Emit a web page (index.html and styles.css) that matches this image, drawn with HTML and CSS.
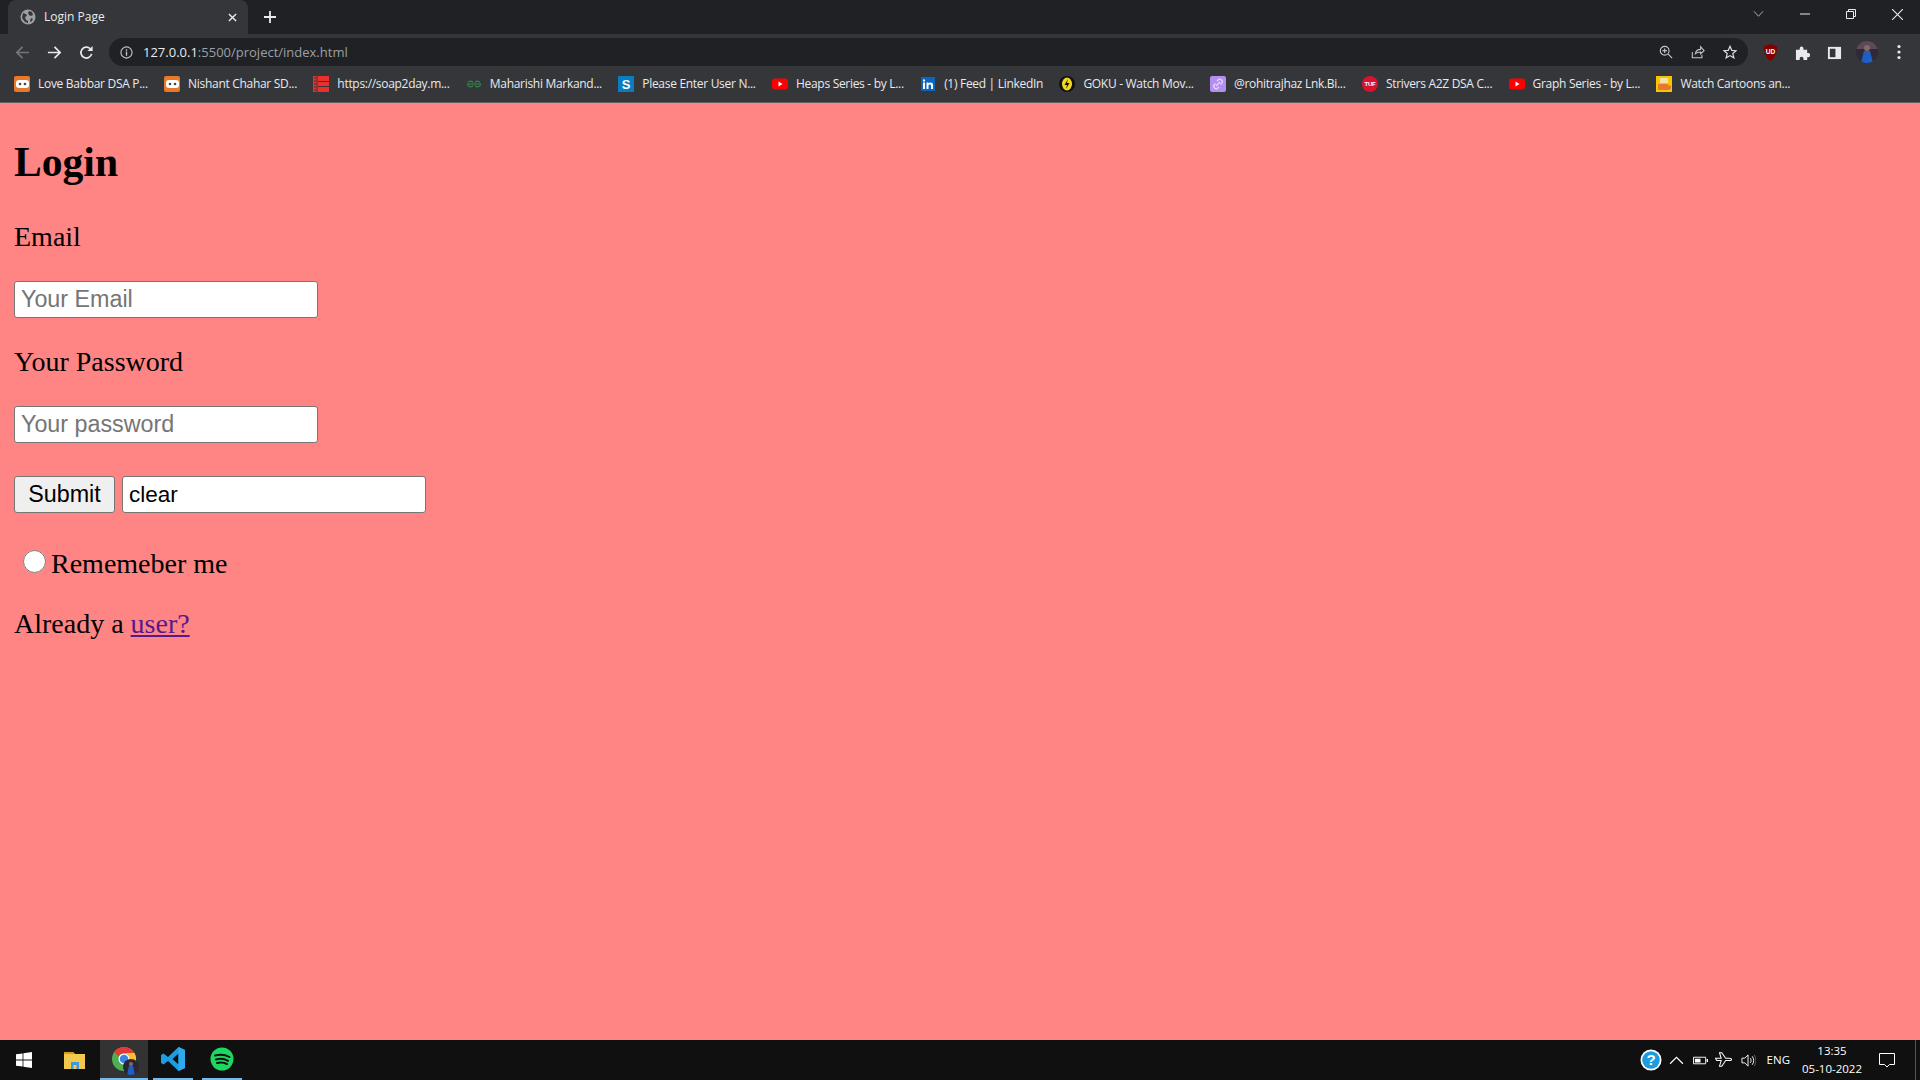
FILE: index.html
```html
<!DOCTYPE html>
<html>
<head>
    <title>Login Page</title>
    <link rel="stylesheet" href="styles.css">
</head>
<body>
    <div class="tabstrip">
        <div class="tab">
            <svg class="tab-favicon" viewBox="0 0 16 16"><circle cx="8" cy="8" r="7.500" fill="#9aa0a6"/><path d="M3 4l3 1 1 2-2 1 1 3 2 1v2l-3-1-3-4zM9 2l3 1 1 3-2 1-2-1-1-2zM11 9l2 1-2 3-1-1z" fill="#35363a"/></svg>
            <span class="tab-title">Login Page</span>
            <svg class="tab-close" viewBox="0 0 10 10"><path d="M1 1l8 8M9 1l-8 8" stroke="#e8eaed" stroke-width="1.6"/></svg>
        </div>
        <svg class="tab-new" viewBox="0 0 12 12"><path d="M6 0v12M0 6h12" stroke="#e8eaed" stroke-width="1.8"/></svg>
        <svg class="win-chevron" viewBox="0 0 12 8"><path d="M1 1l5 5.500 5-5.500" fill="none" stroke="#b5b7ba" stroke-width="1"/></svg>
        <svg class="win-btn win-min" viewBox="0 0 10 10"><path d="M0 5h10" stroke="#e8eaed"/></svg>
        <svg class="win-btn win-restore" viewBox="0 0 10 10"><path d="M.5 2.500h7v7h-7zM2.500 2.500v-2h7v7h-2" fill="none" stroke="#e8eaed"/></svg>
        <svg class="win-btn win-close" viewBox="0 0 10 10"><path d="M0 0l10 10M10 0l-10 10" stroke="#e8eaed"/></svg>
    </div>

    <div class="toolbar">
        <svg class="nav-icon nav-back" viewBox="0 0 16 16"><path d="M15 8H2M8 2L2 8l6 6" fill="none" stroke="#73767a" stroke-width="1.8"/></svg>
        <svg class="nav-icon" viewBox="0 0 16 16"><path d="M1 8h13M8 2l6 6-6 6" fill="none" stroke="#e8eaed" stroke-width="1.8"/></svg>
        <svg class="nav-icon" viewBox="0 0 16 16"><path d="M13.500 9.500A5.800 5.800 0 1 1 12 4" fill="none" stroke="#e8eaed" stroke-width="1.800"/><path d="M14.500 1v5.500H9z" fill="#e8eaed"/></svg>
        <div class="omnibox">
            <svg class="omni-info" viewBox="0 0 14 14"><circle cx="7" cy="7" r="6" fill="none" stroke="#c4c7ca" stroke-width="1.200"/><path d="M7 6v4.500M7 3.500v1.500" stroke="#c4c7ca" stroke-width="1.400"/></svg>
            <span class="url"><span class="url-host">127.0.0.1</span>:5500/project/index.html</span>
            <div class="omni-actions">
                <svg class="omni-icon" viewBox="0 0 16 16"><circle cx="6.500" cy="6.500" r="5" fill="none" stroke="#c4c7ca" stroke-width="1.300"/><path d="M10.500 10.500l4.500 4.500M4 6.500h5M6.500 4v5" stroke="#c4c7ca" stroke-width="1.300"/></svg>
                <svg class="omni-icon" viewBox="0 0 16 16"><path d="M1.500 8v6.500h11V11M5 10c.5-3.500 3-5 6-5V2l4 4.500L11 10V8c-2.500 0-4.500.5-6 2z" fill="none" stroke="#c4c7ca" stroke-width="1.200"/></svg>
                <svg class="omni-icon" viewBox="0 0 16 16"><path d="M8 1.500l2 4.600 5 .4-3.800 3.300 1.200 4.900L8 12.100l-4.400 2.600 1.200-4.900L1 6.500l5-.4z" fill="none" stroke="#dadce0" stroke-width="1.400"/></svg>
            </div>
        </div>
        <svg class="ext-icon ext-shield" viewBox="0 0 16 18"><path d="M8 0l7 2.500c0 7-1.500 11.500-7 15.500C2.500 14 1 9.500 1 2.500z" fill="#800000"/><text x="8" y="11" class="shield-text">UD</text></svg>
        <svg class="ext-icon" viewBox="0 0 16 16"><path d="M1 5h4V3.500a2 2 0 0 1 4 0V5h4v3.500h1a2.200 2.200 0 0 1 0 4.500h-1v3H9v-1.500a2 2 0 0 0-4 0V16H1z" fill="#e8eaed"/></svg>
        <svg class="ext-icon" viewBox="0 0 16 16"><path d="M1 2h14v13H1z" fill="#e8eaed"/><path d="M3 4h6v9H3z" fill="#35363a"/></svg>
        <svg class="ext-avatar" viewBox="0 0 22 22"><rect width="22" height="22" fill="#2f2a3a"/><path d="M0 0h22v8H0z" fill="#5b4a58"/><circle cx="11" cy="7" r="3" fill="#8a6a58"/><path d="M5 22l3-12h6l3 12z" fill="#1f5fc4"/></svg>
        <svg class="ext-menu" viewBox="0 0 4 16"><circle cx="2" cy="2.500" r="1.600" fill="#e8eaed"/><circle cx="2" cy="8" r="1.600" fill="#e8eaed"/><circle cx="2" cy="13.500" r="1.600" fill="#e8eaed"/></svg>
    </div>

    <div class="bookmarks">
        <div class="bookmark">
            <svg class="fav" viewBox="0 0 16 16"><rect width="16" height="16" rx="2" fill="#e8792b"/><rect x="2" y="4" width="13" height="8" rx="3" fill="#fff"/><circle cx="6" cy="8" r="1.300" fill="#444"/><circle cx="11" cy="8" r="1.300" fill="#444"/></svg>
            <span>Love Babbar DSA P...</span>
        </div>
        <div class="bookmark">
            <svg class="fav" viewBox="0 0 16 16"><rect width="16" height="16" rx="2" fill="#e8792b"/><rect x="2" y="4" width="13" height="8" rx="3" fill="#fff"/><circle cx="6" cy="8" r="1.300" fill="#444"/><circle cx="11" cy="8" r="1.300" fill="#444"/></svg>
            <span>Nishant Chahar SD...</span>
        </div>
        <div class="bookmark">
            <svg class="fav" viewBox="0 0 16 16"><path d="M0 0h16v16H0z" fill="#e9302a"/><path d="M4 0v16M5 5.500h11M5 10.500h11" stroke="#35363a"/><path d="M1 2h2M1 5h2M1 8h2M1 11h2M1 14h2" stroke="#35363a" stroke-width="1.200"/></svg>
            <span>https://soap2day.m...</span>
        </div>
        <div class="bookmark">
            <svg class="fav" viewBox="0 0 16 16"><path d="M8 8H1.500a3 3 0 0 0 5.500 1.500M8 8h6.500a3 3 0 0 1-5.500 1.500M7 6.500A3 3 0 0 0 2 6.500M9 6.500a3 3 0 0 1 5 0" fill="none" stroke="#2f8d46" stroke-width="1.200"/></svg>
            <span>Maharishi Markand...</span>
        </div>
        <div class="bookmark">
            <svg class="fav" viewBox="0 0 16 16"><rect width="16" height="16" fill="#0a7cc1"/><text x="8" y="13" class="fav-s">S</text></svg>
            <span>Please Enter User N...</span>
        </div>
        <div class="bookmark">
            <svg class="fav" viewBox="0 0 16 16"><rect y="2.500" width="16" height="11" rx="3" fill="#f00"/><path d="M6.500 5.500v5l4-2.500z" fill="#fff"/></svg>
            <span>Heaps Series - by L...</span>
        </div>
        <div class="bookmark">
            <svg class="fav" viewBox="0 0 16 16"><rect x="1" y="1" width="14" height="14" fill="#0a66c2"/><path d="M3 6.500h2V13H3zM3 3.500h2v2H3zM6.500 6.500h2v1c1-1.500 4.500-1.500 4.500 1.500v4h-2V9.500c0-1.500-2.500-1.500-2.500 0V13h-2z" fill="#fff"/></svg>
            <span>(1) Feed | LinkedIn</span>
        </div>
        <div class="bookmark">
            <svg class="fav" viewBox="0 0 16 16"><circle cx="8" cy="8" r="8" fill="#111"/><ellipse cx="8" cy="8" rx="5" ry="6.500" fill="#f4d81c"/><path d="M9 3L5.500 9h2.500L7 13l3.500-6H8z" fill="#111"/></svg>
            <span>GOKU - Watch Mov...</span>
        </div>
        <div class="bookmark">
            <svg class="fav" viewBox="0 0 16 16"><rect width="16" height="16" rx="2" fill="#b48ff0"/><path d="M6 10l4-4M7 5l1-1a2 2 0 0 1 3.500 3.500l-1 1M9 11l-1 1A2 2 0 0 1 4.500 8.500l1-1" fill="none" stroke="#e6dafc" stroke-width="1.200"/></svg>
            <span>@rohitrajhaz Lnk.Bi...</span>
        </div>
        <div class="bookmark">
            <svg class="fav" viewBox="0 0 16 16"><circle cx="8" cy="8" r="8" fill="#d8132f"/><text x="8" y="10" class="fav-tuf">TUF</text></svg>
            <span>Strivers A2Z DSA C...</span>
        </div>
        <div class="bookmark">
            <svg class="fav" viewBox="0 0 16 16"><rect y="2.500" width="16" height="11" rx="3" fill="#f00"/><path d="M6.500 5.500v5l4-2.500z" fill="#fff"/></svg>
            <span>Graph Series - by L...</span>
        </div>
        <div class="bookmark">
            <svg class="fav" viewBox="0 0 16 16"><rect width="16" height="16" fill="#f7c600"/><rect x="2" y="8" width="10" height="6" fill="#e8792b"/><rect x="4" y="2" width="8" height="5" fill="#f4e3a8"/><path d="M12 9l3 1v3l-3 1z" fill="#e8792b"/></svg>
            <span>Watch Cartoons an...</span>
        </div>
    </div>

    <main class="page">
        <h1>Login</h1>
        <form>
            <p class="field-label">Email</p>
            <input type="email" class="field" placeholder="Your Email">
            <p class="field-label password-label">Your Password</p>
            <input type="password" class="field" placeholder="Your password">
            <div class="actions">
                <input type="submit" class="submit-btn" value="Submit">
                <input type="text" class="field clear-field" value="clear">
            </div>
            <label class="remember"><input type="radio"> Rememeber me</label>
            <p class="already">Already a <a href="#" class="user-link">user?</a></p>
        </form>
    </main>

    <div class="taskbar">
        <div class="task-slot task-start">
            <svg class="task-win" viewBox="0 0 16 16"><path d="M0 2.300l6.600-.9v6.200H0zM7.400 1.300L16 0v7.600H7.400zM0 8.400h6.600v6.200L0 13.700zM7.400 8.400H16V16l-8.600-1.300z" fill="#fff"/></svg>
        </div>
        <div class="task-slot task-files">
            <svg class="task-folder" viewBox="0 0 22 18"><path d="M0 1h9l2 2h10v15H0z" fill="#f2c94c"/><path d="M0 1h9l1.500 2H0z" fill="#d99a1c"/><path d="M7 18v-7h8v7h-2.500v-4h-3v4z" fill="#3f97dd"/></svg>
        </div>
        <div class="task-slot task-chrome">
            <svg class="task-icon" viewBox="0 0 24 24"><circle cx="12" cy="12" r="12" fill="#4caf50"/><path d="M12 0a12 12 0 0 1 10.400 6H12a6 6 0 0 0-5.500 3.500L2.300 5A12 12 0 0 1 12 0z" fill="#e53935"/><path d="M22.400 6A12 12 0 0 1 11 24l5.500-9A6 6 0 0 0 12 6z" fill="#fbc02d"/><circle cx="12" cy="12" r="5.500" fill="#fff"/><circle cx="12" cy="12" r="4.300" fill="#3f82e8"/></svg>
            <svg class="task-badge" viewBox="0 0 16 16"><rect width="16" height="16" fill="#2a2632"/><circle cx="8" cy="5" r="2" fill="#8a6a58"/><path d="M4 16l2-9h4l2 9z" fill="#1f5fc4"/></svg>
        </div>
        <div class="task-slot task-active">
            <svg class="task-icon" viewBox="0 0 24 24"><path d="M17.500 0L24 3v18l-6.500 3L7 14l-4.500 3.500L0 16V8l2.500-1.500L7 10zM17.500 6.500L11.500 12l6 5.500z" fill="#1b9de2"/><path d="M17.500 0L24 3v18l-6.500 3z" fill="#2eaaf0"/></svg>
        </div>
        <div class="task-slot task-active">
            <svg class="task-icon" viewBox="0 0 24 24"><circle cx="12" cy="12" r="11.500" fill="#1ed760"/><path d="M5 8.500c5-1.500 10-1 14.500 1.500M6 12.500c4-1.200 8.500-.8 12 1.300M7 16c3.500-1 7-.6 10 1" fill="none" stroke="#111" stroke-width="2" stroke-linecap="round"/></svg>
        </div>
        <div class="tray">
            <svg class="tray-help" viewBox="0 0 22 22"><circle cx="11" cy="11" r="10.500" fill="#fff"/><circle cx="11" cy="11" r="8.800" fill="#1d9be0"/><text x="11" y="16" class="help-mark">?</text></svg>
            <svg class="tray-icon" viewBox="0 0 14 14"><path d="M1 10l6-6 6 6" fill="none" stroke="#fff" stroke-width="1.100"/></svg>
            <svg class="tray-icon" viewBox="0 0 16 14"><path d="M.5 3.500h13v7H.5z" fill="none" stroke="#fff"/><path d="M2 5h6v4H2zM14.500 5.500h1.500v3h-1.500z" fill="#fff"/></svg>
            <svg class="tray-icon tray-plane" viewBox="0 0 16 16"><path d="M.5 6.500l1 2h4l-1.500 5H6l3.500-5h3c3 0 3-2 0-2h-3L6 1.500H4l1.500 5H1.500z" fill="none" stroke="#fff" stroke-width=".9"/></svg>
            <svg class="tray-icon" viewBox="0 0 16 16"><path d="M1 5.500h3L7.500 2v12L4 10.500H1zM10 5.500c1 1.500 1 3.500 0 5M12 3.500c2 2.500 2 6.500 0 9" fill="none" stroke="#fff"/><path d="M14 2c2.500 3.500 2.500 8.500 0 12" fill="none" stroke="#666"/></svg>
            <span class="tray-lang">ENG</span>
            <div class="tray-clock">
                <span>13:35</span>
                <span>05-10-2022</span>
            </div>
            <svg class="tray-notify" viewBox="0 0 16 16"><path d="M.5 1.500h15v11h-5L8 15l-2.500-2.500h-5z" fill="none" stroke="#fff"/></svg>
            <div class="show-desktop"></div>
        </div>
    </div>
</body>
</html>
```

FILE: styles.css
```css
html, body {
    height: 100%;
}
body {
    margin: 0;
    display: flex;
    flex-direction: column;
    height: 1080px;
    overflow: hidden;
    background: #ff8484;
    font-family: "Liberation Serif", serif;
    color: #000;
}

/* browser chrome */
.tabstrip {
    height: 34px;
    flex: none;
    display: flex;
    align-items: center;
    background: #202124;
    padding-left: 8px;
}
.tab {
    width: 240px;
    height: 34px;
    box-sizing: border-box;
    display: flex;
    align-items: center;
    background: #35363a;
    border-radius: 8px 8px 0 0;
    padding: 0 12px;
}
.tab-favicon {
    width: 16px;
    height: 16px;
    flex: none;
}
.tab-title {
    flex: 1;
    margin-left: 8px;
    margin-bottom: 2px;
    font: 12px "Open Sans", sans-serif;
    color: #e8eaed;
}
.tab-close {
    width: 9px;
    height: 9px;
    margin-right: -1px;
}
.tab-new {
    width: 12px;
    height: 12px;
    margin-left: 16px;
}
.win-chevron {
    width: 11px;
    height: 8px;
    margin-left: auto;
    margin-right: 36px;
    margin-bottom: 6px;
}
.win-btn {
    width: 10px;
    height: 10px;
    flex: none;
    margin-bottom: 6px;
}
.win-min {
    margin-right: 36px;
}
.win-restore {
    margin-right: 36px;
}
.win-close {
    width: 11px;
    height: 11px;
    margin-right: 17px;
}

.toolbar {
    height: 34px;
    flex: none;
    display: flex;
    align-items: center;
    box-sizing: border-box;
    background: #35363a;
    padding-left: 15px;
    padding-top: 2px;
}
.nav-icon {
    width: 15px;
    height: 15px;
    flex: none;
    margin-right: 17px;
}
.omnibox {
    width: 1639px;
    height: 28px;
    flex: none;
    margin-left: -2px;
    margin-right: 15px;
    box-sizing: border-box;
    display: flex;
    align-items: center;
    background: #202124;
    border-radius: 14px;
    padding: 0 11px;
}
.omni-info {
    width: 13px;
    height: 13px;
    flex: none;
}
.url {
    margin-left: 10px;
    font: 13px "Open Sans", sans-serif;
    color: #9aa0a6;
}
.url-host {
    color: #e8eaed;
}
.omni-actions {
    margin-left: auto;
    display: flex;
    gap: 18px;
}
.omni-icon {
    width: 14px;
    height: 14px;
}
.ext-icon {
    width: 15px;
    height: 15px;
    flex: none;
    margin-right: 17px;
}
.ext-shield {
    height: 17px;
}
.shield-text {
    font: bold 7px "Liberation Sans", sans-serif;
    fill: #fff;
    text-anchor: middle;
}
.ext-avatar {
    width: 22px;
    height: 22px;
    flex: none;
    margin-left: -3px;
    margin-right: 19px;
    border-radius: 50%;
}
.ext-menu {
    width: 4px;
    height: 16px;
    flex: none;
}

.bookmarks {
    height: 35px;
    flex: none;
    box-sizing: border-box;
    display: flex;
    align-items: center;
    gap: 16.3px;
    background: #35363a;
    border-bottom: 1px solid #5f6062;
    padding-left: 14px;
    padding-bottom: 3px;
    font: 12px "Open Sans", sans-serif;
    color: #e8eaed;
}
.bookmark {
    display: flex;
    align-items: center;
    gap: 8px;
    white-space: nowrap;
    letter-spacing: -0.3px;
}
.fav {
    width: 16px;
    height: 16px;
    flex: none;
}
.fav-s {
    font: bold 13px "Liberation Sans", sans-serif;
    fill: #fff;
    text-anchor: middle;
}
.fav-tuf {
    font: bold 6px "Liberation Sans", sans-serif;
    fill: #fff;
    text-anchor: middle;
}

/* the page itself */
.page {
    flex: 1;
    padding: 36px 14px 0;
}
h1 {
    margin: 0 0 36px;
    font-size: 41.6px;
    line-height: 46px;
}
.field-label {
    margin: 0 0 28px;
    font-size: 28px;
    line-height: 32px;
}
.password-label {
    margin-top: 28px;
}
.field {
    width: 304px;
    height: 37px;
    box-sizing: border-box;
    display: block;
    padding: 0 6px;
    border: 1px solid #767676;
    border-radius: 3px;
    background: #fff;
    font: 23.3px "Liberation Sans", sans-serif;
    color: #000;
}
.field::placeholder {
    color: #757575;
}
.actions {
    display: flex;
    gap: 7px;
    margin-top: 33px;
}
.clear-field {
    font-size: 22.5px;
}
.submit-btn {
    width: 101px;
    height: 37px;
    box-sizing: border-box;
    padding: 0;
    border: 1px solid #767676;
    border-radius: 3px;
    background: #efefef;
    font: 23.3px "Liberation Sans", sans-serif;
    color: #000;
}
.remember {
    display: flex;
    align-items: center;
    margin-top: 35px;
    padding-left: 9px;
    font-size: 28px;
    line-height: 32px;
    white-space: pre;
}
.remember input {
    width: 23px;
    height: 23px;
    margin: -6px -2px 0 0;
    accent-color: #767676;
}
.already {
    margin: 28px 0 0;
    font-size: 28px;
    line-height: 32px;
}
.user-link {
    color: #551a8b;
}

/* windows taskbar */
.taskbar {
    height: 40px;
    flex: none;
    display: flex;
    align-items: stretch;
    background: #101010;
}
.task-slot {
    display: flex;
    align-items: center;
    justify-content: center;
    box-sizing: border-box;
    position: relative;
}
.task-start {
    width: 48px;
}
.task-files {
    width: 52px;
}
.task-chrome {
    width: 48px;
    margin-right: 5px;
    background: #333;
    border-bottom: 2px solid #76b9ed;
}
.task-active {
    width: 40px;
    margin-right: 9px;
    border-bottom: 2px solid #76b9ed;
}
.task-win {
    width: 16px;
    height: 16px;
}
.task-folder {
    width: 22px;
    height: 18px;
    margin-left: 2px;
}
.task-icon {
    width: 24px;
    height: 24px;
}
.task-badge {
    position: absolute;
    left: 23px;
    top: 19px;
    width: 16px;
    height: 16px;
    border-radius: 50%;
}
.tray {
    margin-left: auto;
    display: flex;
    align-items: center;
    color: #fff;
    font: 12px "Open Sans", sans-serif;
}
.tray-help {
    width: 22px;
    height: 22px;
    margin-right: 7px;
}
.help-mark {
    font: bold 15px "Liberation Sans", sans-serif;
    fill: #fff;
    text-anchor: middle;
}
.tray-icon {
    width: 15px;
    height: 15px;
    margin-right: 9px;
}
.tray-plane {
    width: 18px;
    height: 18px;
    margin-left: -2px;
    margin-right: 8px;
}
.tray-lang {
    margin-left: 2px;
    margin-bottom: 1px;
    font-size: 11.5px;
}
.tray-clock {
    width: 72px;
    margin-left: 6px;
    margin-right: 11px;
    margin-bottom: 2px;
    display: flex;
    flex-direction: column;
    align-items: center;
    gap: 3px;
    font-size: 11.5px;
    line-height: 15px;
}
.tray-notify {
    width: 16px;
    height: 16px;
    margin-right: 20px;
}
.show-desktop {
    width: 5px;
    height: 100%;
    border-left: 1px solid #555;
    box-sizing: border-box;
}
```
